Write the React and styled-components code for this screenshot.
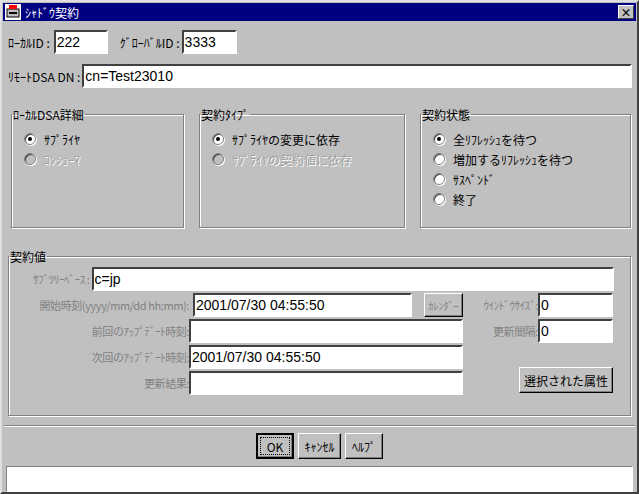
import React from 'react';
import styled, { createGlobalStyle } from 'styled-components';

const Global = createGlobalStyle`
  html, body { margin: 0; padding: 0; background: #c0c0c0; }
  body { font-family: "Noto Sans CJK JP", "DejaVu Sans", sans-serif; font-size: 12px; color: #000; }
`;

const Window = styled.div`
  width: 639px;
  height: 494px;
  box-sizing: border-box;
  background: #c0c0c0;
  border: 2px solid;
  border-color: #dfdfdf #404040 #404040 #dfdfdf;
  display: flex;
  flex-direction: column;
  overflow: hidden;
`;

const TitleBar = styled.div`
  height: 18px;
  margin: 1px 1px 0 1px;
  background: #000080;
  color: #fff;
  display: flex;
  align-items: center;
  padding: 0 2px;
  gap: 4px;
  font-size: 12px;
`;

const TitleText = styled.span`
  flex: 1;
`;

const CloseBox = styled.div`
  width: 14px;
  height: 12px;
  background: #c0c0c0;
  color: #000;
  border: 1px solid;
  border-color: #fff #404040 #404040 #fff;
  display: flex;
  align-items: center;
  justify-content: center;
  font-size: 11px;
  font-weight: bold;
  line-height: 1;
`;

const Body = styled.div`
  flex: 1;
  display: flex;
  flex-direction: column;
  padding: 0 2px;
`;

const Row = styled.div`
  display: flex;
  align-items: center;
  height: 24px;
  margin-top: ${(p) => p.top || 0}px;
  padding-left: ${(p) => p.left || 4}px;
  padding-right: ${(p) => p.right || 0}px;
`;

const Label = styled.span`
  color: ${(p) => (p.dim ? '#808080' : '#000')};
  font-size: ${(p) => (p.dim ? 11 : 12)}px;
  letter-spacing: ${(p) => (p.dim ? '-0.4px' : '0')};
  white-space: nowrap;
  width: ${(p) => (p.w ? `${p.w}px` : 'auto')};
  text-align: ${(p) => (p.right ? 'right' : 'left')};
  margin-left: ${(p) => p.ml || 0}px;
  flex-shrink: 0;
  overflow: visible;
  direction: ${(p) => (p.right ? 'rtl' : 'ltr')};
  unicode-bidi: plaintext;
`;

const Field = styled.div`
  box-sizing: border-box;
  height: ${(p) => p.h || 24}px;
  width: ${(p) => (p.w ? `${p.w}px` : 'auto')};
  flex: ${(p) => (p.w ? 'none' : 1)};
  background: #fff;
  border: 2px solid;
  border-color: #404040 #fff #fff #404040;
  font-family: "Liberation Sans", "Noto Sans CJK JP", sans-serif;
  font-size: 14px;
  line-height: 20px;
  padding-left: 1px;
  margin-left: ${(p) => p.ml || 0}px;
  white-space: nowrap;
  overflow: hidden;
`;

const Groups = styled.div`
  display: flex;
  gap: 15px;
  margin-top: 18px;
  padding: 0 4px 0 7px;
`;

const Group = styled.fieldset`
  box-sizing: border-box;
  margin: 0;
  width: ${(p) => (p.w ? `${p.w}px` : 'auto')};
  flex: ${(p) => (p.w ? 'none' : 1)};
  height: ${(p) => p.h}px;
  border: 1px solid #808080;
  box-shadow: inset 1px 1px 0 #fff, 1px 1px 0 #fff;
  padding: 6px 12px 0 12px;
`;

const Legend = styled.legend`
  padding: 0 1px;
  margin-left: -12px;
  font-size: 12px;
`;

const Radio = styled.div`
  display: flex;
  align-items: center;
  gap: 8px;
  height: 20px;
  color: ${(p) => (p.disabled ? '#a0a0a0' : '#000')};
  text-shadow: ${(p) => (p.disabled ? '1px 1px 0 #fff' : 'none')};
`;

const Dot = styled.span`
  box-sizing: border-box;
  width: 12px;
  height: 12px;
  border-radius: 50%;
  background: ${(p) => (p.disabled ? '#c0c0c0' : '#fff')};
  border: 1px solid #808080;
  box-shadow: inset 1px 1px 0 #404040, 1px 1px 0 #fff;
  display: flex;
  align-items: center;
  justify-content: center;
  &::after {
    content: '';
    width: 4px;
    height: 4px;
    border-radius: 50%;
    background: ${(p) => (p.on ? '#000' : 'transparent')};
  }
`;

const ValueGroup = styled(Group)`
  margin: 20px 4px 0 4px;
  padding: 2px 16px 0 4px;
`;

const Grid = styled.div`
  display: grid;
  grid-template-columns: 176px 274px 75px 75px;
  row-gap: 2px;
  align-items: center;
  margin-top: 2px;
`;

const Btn = styled.button`
  box-sizing: border-box;
  height: ${(p) => p.h || 24}px;
  width: ${(p) => (p.w ? `${p.w}px` : 'auto')};
  background: #c0c0c0;
  border: 1px solid;
  border-color: #fff #000 #000 #fff;
  box-shadow: inset -1px -1px 0 #808080;
  font-family: "Noto Sans CJK JP", sans-serif;
  font-size: ${(p) => p.fs || 12}px;
  color: ${(p) => (p.dim ? '#808080' : '#000')};
  padding: 0 2px;
  white-space: nowrap;
  margin-left: ${(p) => p.ml || 0}px;
  justify-self: ${(p) => p.js || 'auto'};
  outline: ${(p) => (p.focus ? '1px dotted #000' : 'none')};
  outline-offset: -5px;
`;

const Separator = styled.div`
  margin: 9px 0 0 0;
  border-top: 1px solid #808080;
  border-bottom: 1px solid #fff;
`;

const Buttons = styled.div`
  display: flex;
  justify-content: center;
  gap: 4px;
  margin-top: 6px;
`;

const Status = styled.div`
  height: 24px;
  margin: 7px 2px 0 2px;
  background: #fff;
  border: 1px solid;
  border-color: #808080 #fff #fff #808080;
`;

function Icon() {
  return (
    <svg width="16" height="16" viewBox="0 0 16 16">
      <rect x="0" y="0" width="16" height="16" fill="#fff" />
      <rect x="2" y="5" width="12" height="8" fill="#c0c0c0" stroke="#000" />
      <rect x="4" y="1" width="8" height="4" fill="#f00" />
      <rect x="4" y="8" width="8" height="2" fill="#000" />
    </svg>
  );
}

export default function App() {
  return (
    <>
      <Global />
      <Window>
        <TitleBar>
          <Icon />
          <TitleText>ｼｬﾄﾞｳ契約</TitleText>
          <CloseBox>×</CloseBox>
        </TitleBar>
        <Body>
          <Row top={9}>
            <Label>ﾛｰｶﾙID :</Label>
            <Field w={54} ml={4}>222</Field>
            <Label ml={12}>ｸﾞﾛｰﾊﾞﾙID :</Label>
            <Field w={55} ml={2}>3333</Field>
          </Row>
          <Row top={10} right={3}>
            <Label>ﾘﾓｰﾄDSA DN :</Label>
            <Field ml={2}>cn=Test23010</Field>
          </Row>
          <Groups>
            <Group w={173} h={122}>
              <Legend>ﾛｰｶﾙDSA詳細</Legend>
              <Radio><Dot on />ｻﾌﾟﾗｲﾔ</Radio>
              <Radio disabled><Dot disabled />ｺﾝｼｭｰﾏ</Radio>
            </Group>
            <Group w={206} h={122}>
              <Legend>契約ﾀｲﾌﾟ</Legend>
              <Radio><Dot on />ｻﾌﾟﾗｲﾔの変更に依存</Radio>
              <Radio disabled><Dot disabled />ｻﾌﾟﾗｲﾔの契約値に依存</Radio>
            </Group>
            <Group h={122}>
              <Legend>契約状態</Legend>
              <Radio><Dot on />全ﾘﾌﾚｯｼｭを待つ</Radio>
              <Radio><Dot />増加するﾘﾌﾚｯｼｭを待つ</Radio>
              <Radio><Dot />ｻｽﾍﾟﾝﾄﾞ</Radio>
              <Radio><Dot />終了</Radio>
            </Group>
          </Groups>
          <ValueGroup h={172}>
            <Legend style={{ marginLeft: -4 }}>契約値</Legend>
            <Row left={20}>
              <Label dim>ｻﾌﾞﾂﾘｰﾍﾞｰｽ :</Label>
              <Field ml={2}>c=jp</Field>
            </Row>
            <Grid>
              <Label dim right>開始時刻(yyyy/mm/dd hh:mm):</Label>
              <Row left={0}>
                <Field w={219}>2001/07/30 04:55:50</Field>
                <Btn dim w={43} ml={12} fs={10}>ｶﾚﾝﾀﾞｰ</Btn>
              </Row>
              <Label dim right>ｳｲﾝﾄﾞｳｻｲｽﾞ:</Label>
              <Field w={75}>0</Field>

              <Label dim right>前回のｱｯﾌﾟﾃﾞｰﾄ時刻:</Label>
              <Field w={274} />
              <Label dim right>更新間隔:</Label>
              <Field w={75}>0</Field>

              <Label dim right>次回のｱｯﾌﾟﾃﾞｰﾄ時刻:</Label>
              <Field w={274}>2001/07/30 04:55:50</Field>
              <span />
              <span />

              <Label dim right>更新結果:</Label>
              <Field w={274} />
              <span />
              <Btn w={94} h={26} js="end" style={{ marginTop: -6 }}>選択された属性</Btn>
            </Grid>
          </ValueGroup>
          <Separator />
          <Buttons>
            <Btn w={38} h={26} focus style={{ border: '2px solid #000' }}>OK</Btn>
            <Btn w={43} h={26}>ｷｬﾝｾﾙ</Btn>
            <Btn w={38} h={26}>ﾍﾙﾌﾟ</Btn>
          </Buttons>
          <Status />
        </Body>
      </Window>
    </>
  );
}
